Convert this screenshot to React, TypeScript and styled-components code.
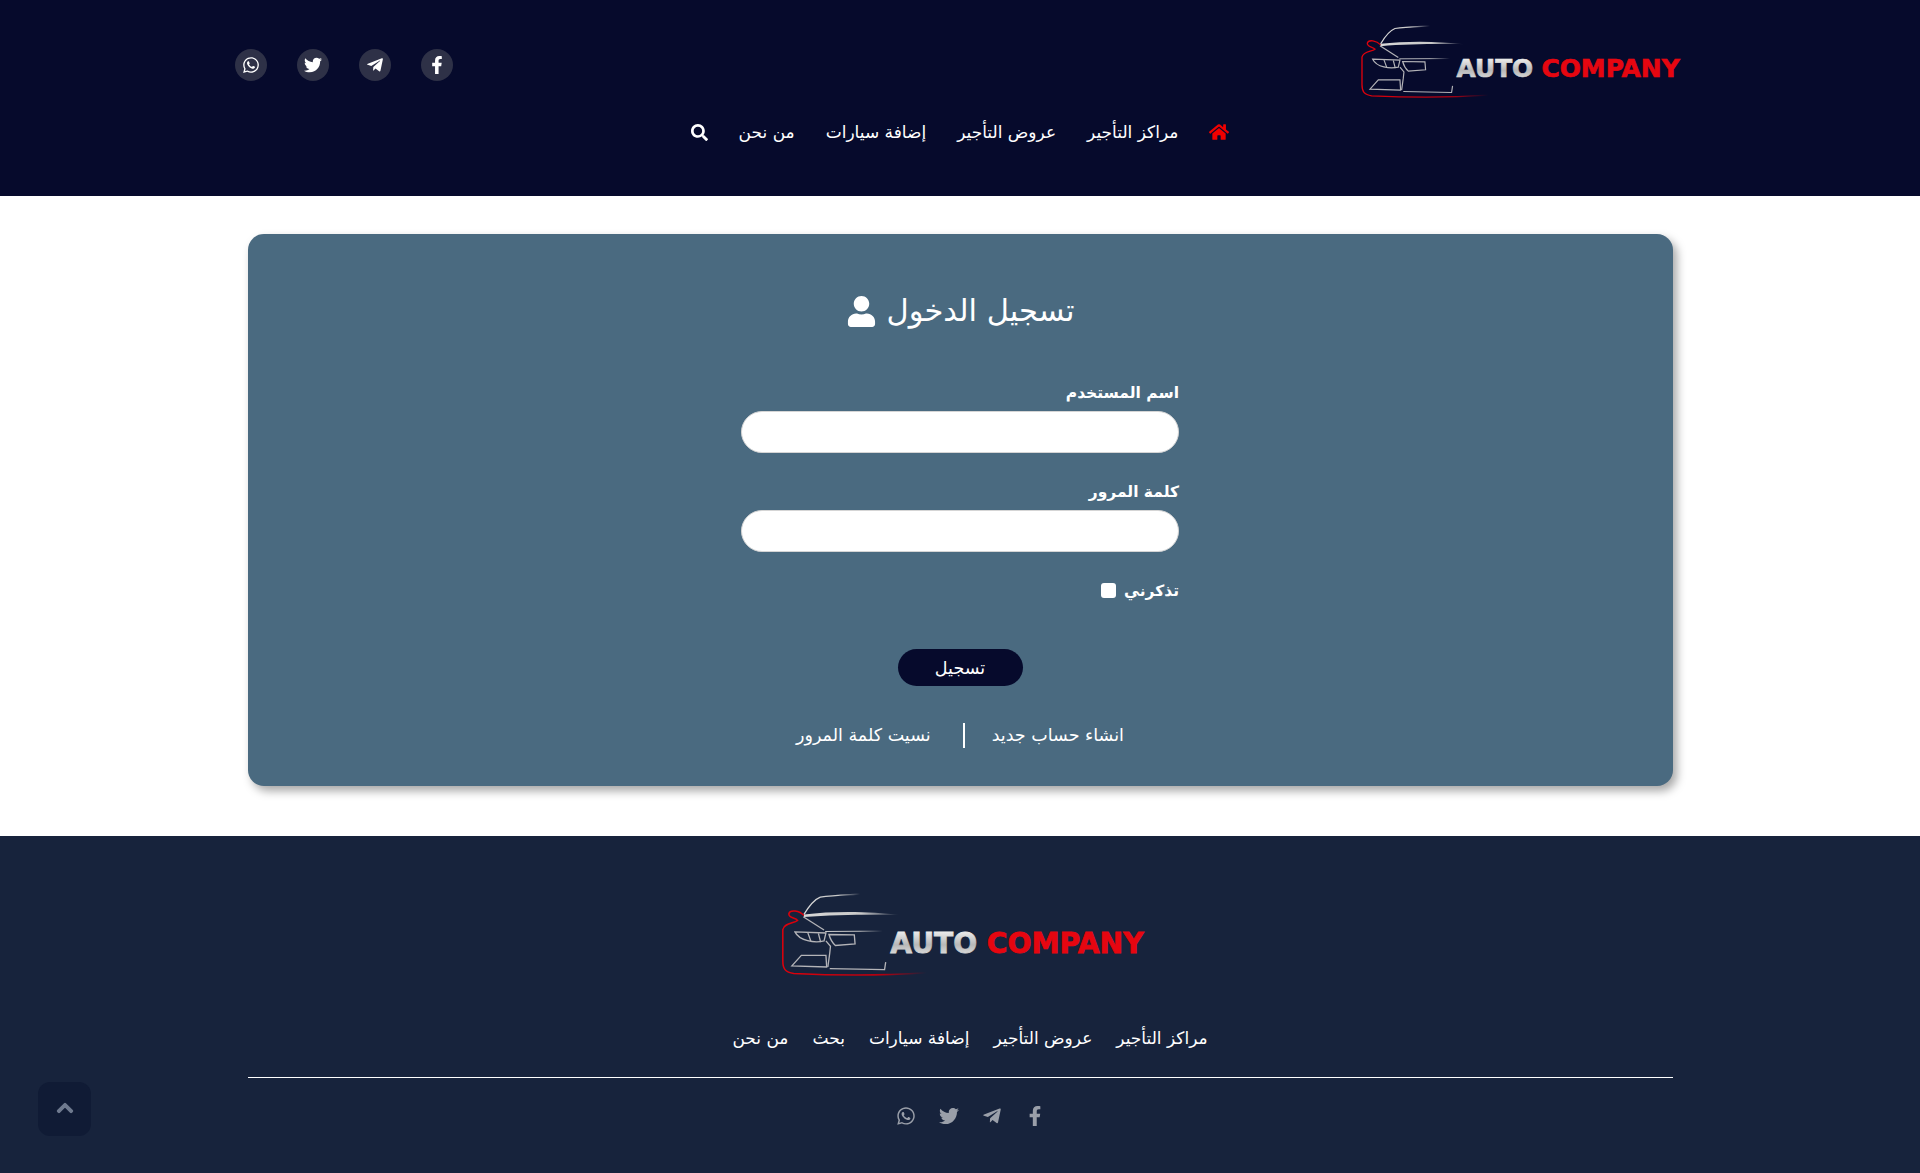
import React from 'react'
import styled, { createGlobalStyle } from 'styled-components'
import {
  FaChevronUp,
  FaFacebookF,
  FaHome,
  FaSearch,
  FaTelegramPlane,
  FaTwitter,
  FaUser,
  FaWhatsapp,
} from 'react-icons/fa'

const GlobalStyle = createGlobalStyle`
  html, body {
    margin: 0;
    padding: 0;
    background: #fff;
    font-family: "DejaVu Sans", "Noto Sans", sans-serif;
  }
  * {
    box-sizing: border-box;
  }
`

const Page = styled.div`
  direction: rtl;
  width: 100%;
  height: 1173px;
  overflow: hidden;
`

const Header = styled.header`
  height: 196px;
  background: #060a2c;
  padding-top: 23px;
`

const HeaderRow = styled.div`
  width: 1450px;
  margin: 0 auto;
  display: flex;
  justify-content: space-between;
  align-items: flex-start;
  height: 77px;
  padding-right: 2px;
`

const LogoSvg = styled.svg<{ $width: number; $height: number }>`
  display: block;
  flex: none;
  direction: ltr;
  width: ${({ $width }) => $width}px;
  height: ${({ $height }) => $height}px;
`

const SocialRow = styled.div`
  display: flex;
  flex-direction: row-reverse;
  gap: 30px;
  margin-top: 26px;
`

const SocialCircle = styled.a`
  width: 32px;
  height: 32px;
  border-radius: 50%;
  background: #2e3147;
  color: #fff;
  display: flex;
  align-items: center;
  justify-content: center;
  font-size: 18px;
`

const MainNav = styled.nav`
  display: flex;
  justify-content: center;
  align-items: center;
  gap: 31px;
  height: 24px;
  margin-top: 20px;
`

const NavLink = styled.a`
  color: #fff;
  font-size: 17px;
  line-height: 24px;
  white-space: nowrap;
`

const HomeLink = styled(NavLink)`
  color: #f00000;
  font-size: 20px;
  display: flex;
`

const SearchLink = styled(NavLink)`
  font-size: 17px;
  display: flex;
`

const Panel = styled.section`
  width: 1425px;
  height: 552px;
  margin: 38px auto 50px;
  background: #4a6a80;
  border-radius: 16px;
  box-shadow: 4px 5px 10px rgba(0, 0, 0, 0.35);
  padding-top: 55px;
  color: #fff;
`

const Title = styled.h2`
  margin: 0 0 48px;
  height: 44px;
  display: flex;
  justify-content: center;
  align-items: center;
  gap: 10px;
  font-size: 30.5px;
  font-weight: 400;
  line-height: 44px;
`

const Form = styled.form`
  width: 438px;
  margin: 0 auto;
  display: flex;
  flex-direction: column;
`

const Field = styled.div`
  display: flex;
  flex-direction: column;
  gap: 6px;
  margin-bottom: 27px;
`

const Label = styled.label`
  font-size: 15.5px;
  font-weight: 700;
  line-height: 24px;
`

const TextInput = styled.input`
  width: 100%;
  height: 42px;
  border: 1px solid #d5d5d5;
  border-radius: 21px;
  background: #fff;
  outline: none;
`

const RememberRow = styled.label`
  display: flex;
  align-items: center;
  gap: 8px;
  height: 24px;
  font-size: 15.5px;
  font-weight: 700;
  line-height: 24px;
`

const Checkbox = styled.input`
  appearance: none;
  width: 15px;
  height: 15px;
  margin: 0 0 2px;
  background: #fff;
  border-radius: 3px;
`

const SubmitButton = styled.button`
  align-self: center;
  width: 125px;
  height: 37px;
  margin-top: 46px;
  border: 0;
  border-radius: 19px;
  background: #060a2c;
  color: #fff;
  font-family: inherit;
  font-size: 17.5px;
`

const LinksRow = styled.div`
  display: flex;
  justify-content: center;
  align-items: center;
  margin-top: 37px;
  height: 25px;
`

const PlainLink = styled.a`
  font-size: 17.5px;
  line-height: 25px;
  color: #fff;
  white-space: nowrap;
`

const Divider = styled.span`
  width: 2px;
  height: 25px;
  margin-right: 27px;
  margin-left: 32px;
  background: #fff;
`

const Footer = styled.footer`
  height: 337px;
  background: #17233c;
  color: #fff;
  padding-top: 55px;
`

const FooterLogo = styled.div`
  display: flex;
  justify-content: center;
  margin-left: 7px;
`

const FooterNav = styled.nav`
  display: flex;
  justify-content: center;
  gap: 24px;
  margin-top: 48px;
  padding-left: 20px;
`

const Rule = styled.hr`
  width: 1425px;
  margin: 27px auto 0;
  border: 0;
  border-top: 1px solid #fff;
`

const FooterSocial = styled.div`
  display: flex;
  flex-direction: row-reverse;
  justify-content: center;
  gap: 23px;
  margin-top: 28px;
  padding-left: 20px;
  color: #9a9fa9;
  font-size: 20px;
`

const ScrollTop = styled.a`
  position: fixed;
  left: 38px;
  top: 1082px;
  width: 53px;
  height: 54px;
  padding-bottom: 2px;
  border-radius: 12px;
  background: #101b35;
  color: #6f7a8f;
  display: flex;
  align-items: center;
  justify-content: center;
  font-size: 18px;

  svg {
    stroke: currentColor;
    stroke-width: 30px;
  }
`

function Logo({ id, width, height }: { id: string; width: number; height: number }) {
  return (
    <LogoSvg $width={width} $height={height} viewBox="60 40 970 230">
      <defs>
        <linearGradient id={`${id}-red`} x1="0" x2="1" y1="0" y2="0">
          <stop offset="0" stopColor="#e0000a" />
          <stop offset="0.7" stopColor="#b00010" />
          <stop offset="1" stopColor="#b00010" stopOpacity="0" />
        </linearGradient>
        <linearGradient id={`${id}-fade`} x1="0" x2="1" y1="0" y2="0">
          <stop offset="0" stopColor="#d8d8d8" />
          <stop offset="0.6" stopColor="#c8c8c8" />
          <stop offset="1" stopColor="#c8c8c8" stopOpacity="0" />
        </linearGradient>
        <linearGradient id={`${id}-silver`} x1="0" x2="0" y1="0" y2="1">
          <stop offset="0" stopColor="#ffffff" />
          <stop offset="0.55" stopColor="#b8b8b8" />
          <stop offset="1" stopColor="#eeeeee" />
        </linearGradient>
      </defs>
      <path
        d="M122 105C110 92 85 88 82 100C80 112 100 110 105 118C95 126 70 124 66 142L66 225C66 245 72 255 95 258C200 263 340 263 445 256"
        fill="none"
        stroke={`url(#${id}-red)`}
        strokeWidth="4"
      />
      <path
        d="M122 102C135 80 150 62 165 56C200 51 240 50 270 48"
        fill="none"
        stroke={`url(#${id}-fade)`}
        strokeWidth="3.5"
      />
      <path d="M122 102C200 92 300 94 375 103C300 102 200 102 122 109Z" fill={`url(#${id}-fade)`} />
      <g fill="none" stroke="#b4b4b8" strokeWidth="3.5">
        <path d="M120 108L175 143" />
        <path d="M98 148L180 151L175 172C150 178 110 172 98 148Z" />
        <path d="M132 150L140 172M160 152L166 175" />
        <path d="M188 155L255 156L257 180L205 184C196 176 191 166 188 155Z" />
        <path d="M180 172L192 186L190 205L185 241" />
        <path d="M115 210L180 210L182 241L90 238Z" />
        <path d="M190 245L335 248L338 228" />
      </g>
      <path d="M178 147L330 146" stroke={`url(#${id}-fade)`} strokeWidth="2.5" fill="none" />
      <path d="M192 212L330 212" stroke={`url(#${id}-fade)`} strokeWidth="2.5" fill="none" />
      <text
        x="350"
        y="203"
        fontFamily="DejaVu Sans"
        fontWeight="700"
        fontSize="75"
        textLength="230"
        lengthAdjust="spacingAndGlyphs"
        fill={`url(#${id}-silver)`}
        stroke={`url(#${id}-silver)`}
        strokeWidth="2"
      >
        AUTO
      </text>
      <text
        x="605"
        y="203"
        fontFamily="DejaVu Sans"
        fontWeight="700"
        fontSize="75"
        textLength="415"
        lengthAdjust="spacingAndGlyphs"
        fill="#e60610"
        stroke="#e60610"
        strokeWidth="2"
      >
        COMPANY
      </text>
    </LogoSvg>
  )
}

export default function App() {
  return (
    <Page>
      <GlobalStyle />
      <Header>
        <HeaderRow>
          <Logo id="top" width={323} height={77} />
          <SocialRow>
            <SocialCircle><FaWhatsapp /></SocialCircle>
            <SocialCircle><FaTwitter /></SocialCircle>
            <SocialCircle><FaTelegramPlane /></SocialCircle>
            <SocialCircle><FaFacebookF /></SocialCircle>
          </SocialRow>
        </HeaderRow>
        <MainNav>
          <HomeLink><FaHome /></HomeLink>
          <NavLink>مراكز التأجير</NavLink>
          <NavLink>عروض التأجير</NavLink>
          <NavLink>إضافة سيارات</NavLink>
          <NavLink>من نحن</NavLink>
          <SearchLink><FaSearch /></SearchLink>
        </MainNav>
      </Header>

      <Panel>
        <Title>
          تسجيل الدخول
          <FaUser size={31} />
        </Title>
        <Form>
          <Field>
            <Label>اسم المستخدم</Label>
            <TextInput type="text" />
          </Field>
          <Field>
            <Label>كلمة المرور</Label>
            <TextInput type="password" />
          </Field>
          <RememberRow>
            تذكرني
            <Checkbox type="checkbox" />
          </RememberRow>
          <SubmitButton type="button">تسجيل</SubmitButton>
        </Form>
        <LinksRow>
          <PlainLink>انشاء حساب جديد</PlainLink>
          <Divider />
          <PlainLink>نسيت كلمة المرور</PlainLink>
        </LinksRow>
      </Panel>

      <Footer>
        <FooterLogo>
          <Logo id="bottom" width={368} height={87} />
        </FooterLogo>
        <FooterNav>
          <NavLink>مراكز التأجير</NavLink>
          <NavLink>عروض التأجير</NavLink>
          <NavLink>إضافة سيارات</NavLink>
          <NavLink>بحث</NavLink>
          <NavLink>من نحن</NavLink>
        </FooterNav>
        <Rule />
        <FooterSocial>
          <FaWhatsapp />
          <FaTwitter />
          <FaTelegramPlane />
          <FaFacebookF />
        </FooterSocial>
      </Footer>
      <ScrollTop><FaChevronUp /></ScrollTop>
    </Page>
  )
}
